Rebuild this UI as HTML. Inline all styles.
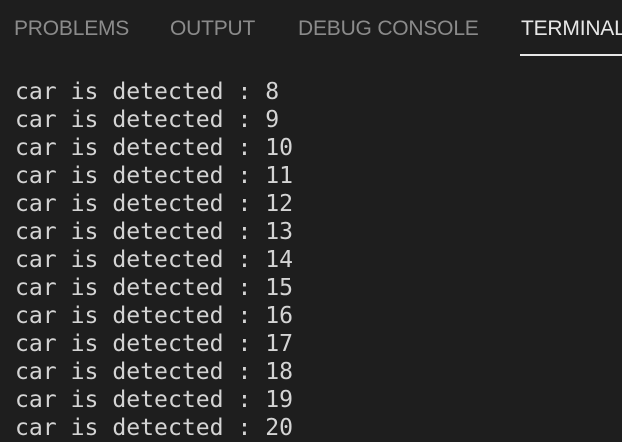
<!DOCTYPE html>
<html><head><style>
html,body{margin:0;padding:0;background:#1e1e1e;width:622px;height:442px;overflow:hidden}
.tabs{position:absolute;top:0;left:0;height:56px;width:622px;font-family:"Liberation Sans",sans-serif;font-size:21px;color:#8b8b8b}
.tab{position:absolute;top:17px;white-space:nowrap;letter-spacing:-0.2px}
.act{color:#e7e7e7}
.ul{position:absolute;left:520px;top:54px;width:102px;height:2px;background:#e7e7e7}
pre{position:absolute;left:15px;top:78px;margin:0;font-family:"DejaVu Sans Mono",monospace;font-size:23.1px;line-height:28px;color:#d4d4d4}
</style></head><body>
<div class="tabs">
<span class="tab" style="left:14px">PROBLEMS</span>
<span class="tab" style="left:170px">OUTPUT</span>
<span class="tab" style="left:298px">DEBUG CONSOLE</span>
<span class="tab act" style="left:521px">TERMINAL</span>
<div class="ul"></div>
</div>
<pre>car is detected : 8
car is detected : 9
car is detected : 10
car is detected : 11
car is detected : 12
car is detected : 13
car is detected : 14
car is detected : 15
car is detected : 16
car is detected : 17
car is detected : 18
car is detected : 19
car is detected : 20</pre>
</body></html>
